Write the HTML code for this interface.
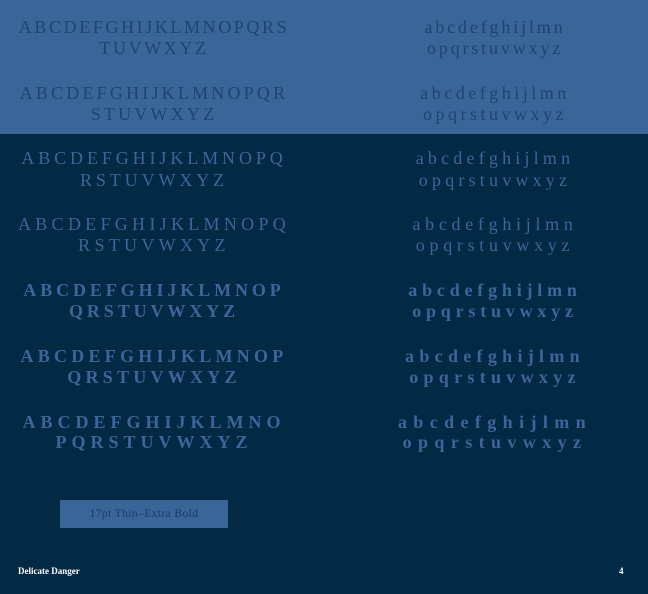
<!DOCTYPE html>
<html><head><style>
html,body{margin:0;padding:0}
body{width:648px;height:594px;background:#032a44;position:relative;overflow:hidden;font-family:"Liberation Serif",serif}
.top{position:absolute;left:0;top:0;width:648px;height:134px;background:#396599}
.l{position:absolute;white-space:nowrap;text-align:center;font-size:18px;line-height:20px}
.L{left:0;width:308px}
.R{left:340px;width:310px}
.t{color:#1e4470}
.d{color:#3a6699}
.b{font-weight:bold}
</style></head><body>
<div class="top"></div>

<div class="l L t" style="top:17px;letter-spacing:2.6px">ABCDEFGHIJKLMNOPQRS</div>
<div class="l L t" style="top:38px;letter-spacing:2.6px">TUVWXYZ</div>
<div class="l R t" style="top:17px;letter-spacing:2.85px">abcdefghijlmn</div>
<div class="l R t" style="top:38px;letter-spacing:2.85px">opqrstuvwxyz</div>

<div class="l L t" style="top:83px;letter-spacing:3.2px">ABCDEFGHIJKLMNOPQR</div>
<div class="l L t" style="top:104px;letter-spacing:3.2px">STUVWXYZ</div>
<div class="l R t" style="top:83px;letter-spacing:3.5px">abcdefghijlmn</div>
<div class="l R t" style="top:104px;letter-spacing:3.5px">opqrstuvwxyz</div>

<div class="l L d" style="top:148px;letter-spacing:3.9px">ABCDEFGHIJKLMNOPQ</div>
<div class="l L d" style="top:170px;letter-spacing:3.9px">RSTUVWXYZ</div>
<div class="l R d" style="top:148px;letter-spacing:4.2px">abcdefghijlmn</div>
<div class="l R d" style="top:170px;letter-spacing:4.2px">opqrstuvwxyz</div>

<div class="l L d" style="top:214px;letter-spacing:4.3px">ABCDEFGHIJKLMNOPQ</div>
<div class="l L d" style="top:235px;letter-spacing:4.3px">RSTUVWXYZ</div>
<div class="l R d" style="top:214px;letter-spacing:4.7px">abcdefghijlmn</div>
<div class="l R d" style="top:235px;letter-spacing:4.7px">opqrstuvwxyz</div>

<div class="l L d b" style="top:280px;letter-spacing:3.9px">ABCDEFGHIJKLMNOP</div>
<div class="l L d b" style="top:301px;letter-spacing:3.9px">QRSTUVWXYZ</div>
<div class="l R d b" style="top:280px;letter-spacing:4.8px">abcdefghijlmn</div>
<div class="l R d b" style="top:301px;letter-spacing:4.8px">opqrstuvwxyz</div>

<div class="l L d b" style="top:346px;letter-spacing:4.25px">ABCDEFGHIJKLMNOP</div>
<div class="l L d b" style="top:367px;letter-spacing:4.25px">QRSTUVWXYZ</div>
<div class="l R d b" style="top:346px;letter-spacing:5.3px">abcdefghijlmn</div>
<div class="l R d b" style="top:367px;letter-spacing:5.3px">opqrstuvwxyz</div>

<div class="l L d b" style="top:412px;letter-spacing:5px">ABCDEFGHIJKLMNO</div>
<div class="l L d b" style="top:432px;letter-spacing:5px">PQRSTUVWXYZ</div>
<div class="l R d b" style="top:412px;letter-spacing:6.4px">abcdefghijlmn</div>
<div class="l R d b" style="top:432px;letter-spacing:6.4px">opqrstuvwxyz</div>

<div style="position:absolute;left:60px;top:500px;width:168px;height:28px;background:#396599;color:#1a3c63;font-size:11.5px;line-height:28px;text-align:center;letter-spacing:0.4px">17pt Thin–Extra Bold</div>

<div style="position:absolute;left:18px;top:566px;color:#fff;font-size:9px;font-weight:bold">Delicate Danger</div>
<div style="position:absolute;left:619px;top:566px;color:#fff;font-size:9px;font-weight:bold">4</div>
</body></html>
